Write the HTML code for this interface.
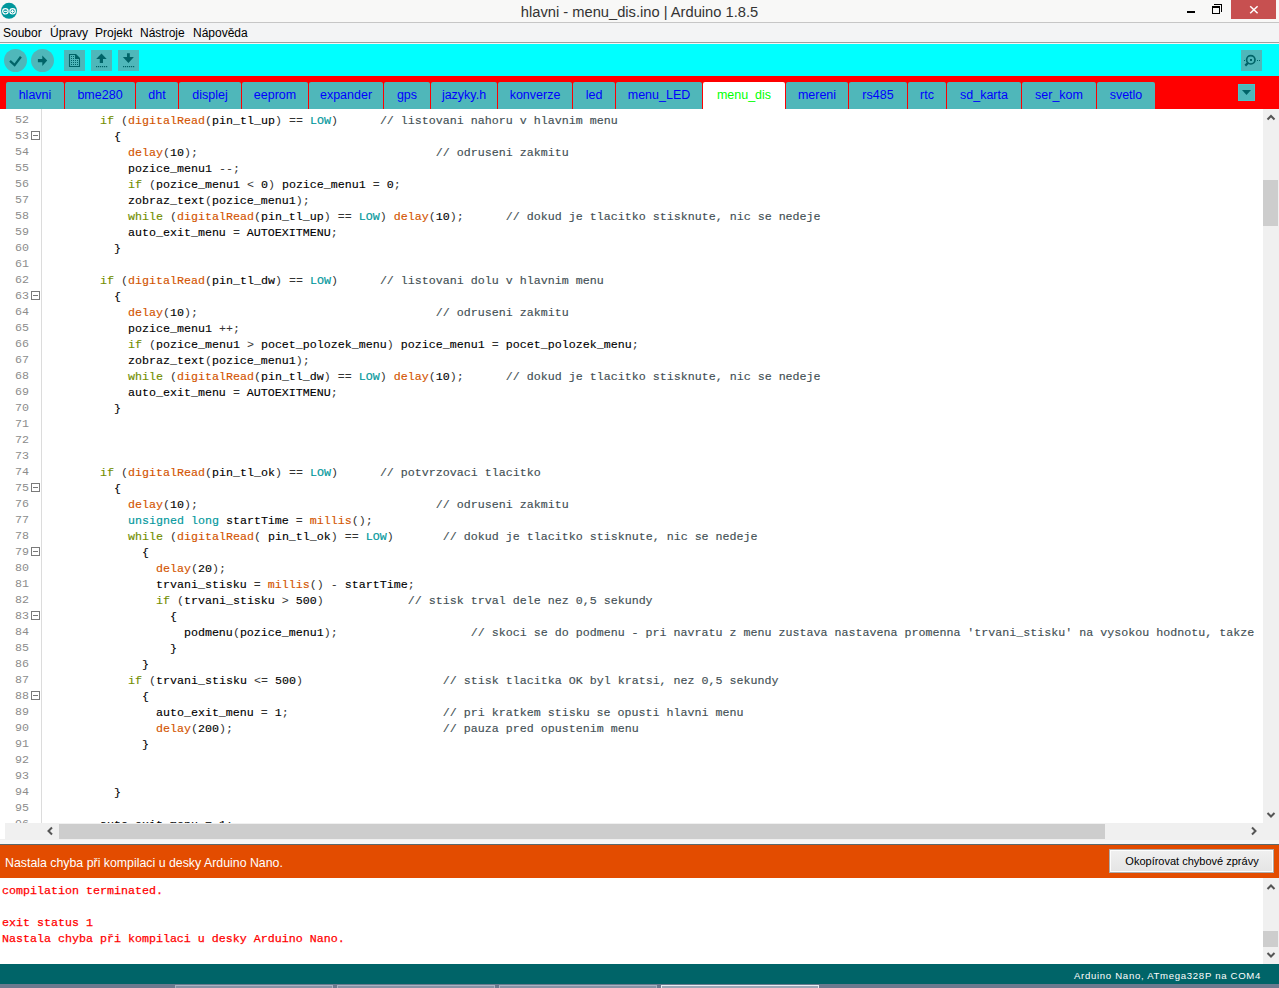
<!DOCTYPE html>
<html><head><meta charset="utf-8"><title>Arduino</title>
<style>
*{margin:0;padding:0;box-sizing:border-box}
html,body{width:1279px;height:988px;overflow:hidden;background:#fff;position:relative}
body{font-family:"Liberation Sans",sans-serif}
.a{position:absolute}
#title{left:0;top:0;width:1279px;height:22px;background:#f8f8f7}
#titletxt{left:0;top:3px;width:1279px;text-align:center;font-size:14.7px;color:#333;line-height:18px;white-space:nowrap}
#tline{left:0;top:22px;width:1279px;height:1px;background:#c6c6c6}
#menubar{left:0;top:23px;width:1279px;height:19px;background:#f3f4f5}
#mline{left:0;top:42px;width:1279px;height:1px;background:#a0a0a0}
#mline2{left:0;top:43px;width:1279px;height:1px;background:#f8f4f4}
.menu{top:26px;font-size:12px;color:#000;line-height:15px;white-space:nowrap}
#toolbar{left:0;top:44px;width:1279px;height:32px;background:#00ffff}
.tb{background:#4fb7ba}
.circ{border-radius:50%}
#tabs{left:0;top:76px;width:1279px;height:33px;background:#ff0000}
.tab{top:82px;height:27px;background:#4fb7ba;border-radius:2px 2px 0 0;color:#0000ff;font-size:12.5px;text-align:center;line-height:26px;white-space:nowrap}
.tab.sel{background:#fff;color:#00ff00}
#editor{left:0;top:109px;width:1263px;height:714px;background:#fff;overflow:hidden}
#gutline{left:41px;top:109px;width:1px;height:714px;background:#dcdcdc}
#nums{left:0;top:112px;width:29px;text-align:right;font-family:"Liberation Mono",monospace;font-size:11.67px;line-height:16px;color:#8c8c8c;white-space:pre}
#code{left:44px;top:113px;font-family:"Liberation Mono",monospace;font-size:11.67px;line-height:16px;color:#000;white-space:pre}
#code b{font-weight:normal}
#code{-webkit-text-stroke:0.12px currentColor}
#code b{-webkit-text-stroke:0.15px currentColor}
#code i{-webkit-text-stroke:0px currentColor}
#code i{font-style:normal;color:#333}
.k{color:#728e00}.f{color:#d35400}.c{color:#00979c}.m{color:#434f54}
.fold{left:31px;width:9px;height:9px;border:1px solid #7a7a7a;background:#fff}
.fold:after{content:"";position:absolute;left:1px;top:3px;width:5px;height:1px;background:#777}
.sbtrack{background:#f0f0f0}
.thumb{background:#cdcdcd}
#strip{left:0;top:839px;width:1279px;height:5px;background:#f0f0f0}
#sline{left:0;top:844px;width:1279px;height:1px;background:#596a6e}
#status{left:0;top:845px;width:1279px;height:33px;background:#e34c00}
#stattxt{left:5px;top:856px;font-size:12.35px;color:#fff;line-height:15px;white-space:nowrap}
#btn{left:1109px;top:849px;width:165px;height:24px;background:linear-gradient(#f0f0f0,#e5e5e5);border:1px solid #acacac;box-shadow:inset 0 0 0 1px #fcfcfc;font-size:11px;color:#000;text-align:center;line-height:22px;white-space:nowrap;padding-left:1px}
#console{left:0;top:878px;width:1263px;height:86px;background:#fff}
#ctext{-webkit-text-stroke:0.25px currentColor;left:2px;top:883px;font-family:"Liberation Mono",monospace;font-size:11.67px;line-height:16px;color:#ff0000;white-space:pre}
#bstatus{left:0;top:964px;width:1279px;height:20px;background:#006468}
#bstxt{left:1074px;top:970px;font-size:9.6px;color:#fff;line-height:12px;white-space:nowrap;letter-spacing:0.69px}
#taskbar{left:0;top:984px;width:1279px;height:4px;background:#6b7a8f}
.tk{top:985px;height:3px;border:1px solid #aab4c2;border-bottom:none;background:#8592a5}

</style></head><body>
<div class="a" id="title"></div>
<svg class="a" style="left:0;top:0" width="20" height="22" viewBox="0 0 20 22">
<circle cx="9" cy="10.8" r="8" fill="#00979c"/>
<circle cx="5.4" cy="11.3" r="2.7" fill="none" stroke="#fff" stroke-width="1.2"/>
<circle cx="12.6" cy="11.3" r="2.7" fill="none" stroke="#fff" stroke-width="1.2"/>
<rect x="4" y="10.8" width="3" height="1.1" fill="#fff"/>
<rect x="11" y="10.8" width="3" height="1.1" fill="#fff"/>
<rect x="11.95" y="9.8" width="1.1" height="3" fill="#fff"/>
</svg>
<div class="a" id="titletxt">hlavni - menu_dis.ino | Arduino 1.8.5</div>
<div class="a" style="left:1187px;top:11px;width:8px;height:2px;background:#000"></div>
<div class="a" style="left:1214px;top:4px;width:8px;height:8px;border:1px solid #000;border-left:none;border-bottom:none"></div>
<div class="a" style="left:1212px;top:6px;width:8px;height:8px;border:1px solid #000;border-top-width:2px;background:#f8f8f7"></div>
<div class="a" style="left:1231px;top:0;width:45px;height:19px;background:#c75050"></div>
<svg class="a" style="left:1249px;top:5px" width="10" height="10" viewBox="0 0 10 10"><path d="M1.2 1.2L8.6 8.2M8.6 1.2L1.2 8.2" stroke="#fff" stroke-width="1.5"/></svg>
<div class="a" id="tline"></div>
<div class="a" id="menubar"></div>
<div class="a" id="mline"></div>
<div class="a" id="mline2"></div>
<div class="a menu" style="left:3px">Soubor</div>
<div class="a menu" style="left:50px">Úpravy</div>
<div class="a menu" style="left:95px">Projekt</div>
<div class="a menu" style="left:140px">Nástroje</div>
<div class="a menu" style="left:193px">Nápověda</div>

<div class="a" id="toolbar"></div>
<div class="a tb circ" style="left:4px;top:49px;width:23px;height:23px"></div>
<div class="a tb circ" style="left:31px;top:49px;width:23px;height:23px"></div>
<div class="a tb" style="left:64px;top:50px;width:21px;height:21px"></div>
<div class="a tb" style="left:91px;top:50px;width:21px;height:21px"></div>
<div class="a tb" style="left:118px;top:50px;width:21px;height:21px"></div>
<div class="a tb" style="left:1241px;top:50px;width:21px;height:21px"></div>
<svg class="a" style="left:0;top:44px" width="160" height="32" viewBox="0 44 160 32">
<path d="M10 60.8l4.6 4.3 6.3-8.4" fill="none" stroke="#006468" stroke-width="2.3"/>
<path d="M37.9 59.1h4.4v-3.5l4.9 5-4.9 5.3v-3.7h-4.4z" fill="#006468"/>
<path d="M69.5 54.5h5.6l4.4 4.4v7.6h-10z" fill="none" stroke="#006468" stroke-width="1.1"/>
<path d="M75 54h1l4 4v1h-5z" fill="#006468"/>
<g fill="#006468"><rect x="71" y="56" width="1" height="1"/><rect x="73" y="56" width="1" height="1"/><rect x="71" y="58" width="1" height="1"/><rect x="73" y="58" width="1" height="1"/><rect x="71" y="60" width="1" height="1"/><rect x="73" y="60" width="1" height="1"/><rect x="75" y="60" width="1" height="1"/><rect x="77" y="60" width="1" height="1"/><rect x="71" y="62" width="1" height="1"/><rect x="73" y="62" width="1" height="1"/><rect x="75" y="62" width="1" height="1"/><rect x="77" y="62" width="1" height="1"/><rect x="71" y="64" width="1" height="1"/><rect x="73" y="64" width="1" height="1"/><rect x="75" y="64" width="1" height="1"/><rect x="77" y="64" width="1" height="1"/></g>
<path d="M101.5 53.5l5.2 5.4h-3.7v4h-3.2v-4h-3.6z" fill="#006468"/>
<g fill="#006468"><rect x="96" y="66" width="1.2" height="1.2"/><rect x="98" y="66" width="1.2" height="1.2"/><rect x="100" y="66" width="1.2" height="1.2"/><rect x="102" y="66" width="1.2" height="1.2"/><rect x="104" y="66" width="1.2" height="1.2"/><rect x="106" y="66" width="1.2" height="1.2"/></g>
<path d="M128.4 63l5.5-6h-4.1v-3.7h-2.8v3.7h-4.1z" fill="#006468"/>
<g fill="#006468"><rect x="123" y="66" width="1.2" height="1.2"/><rect x="125" y="66" width="1.2" height="1.2"/><rect x="127" y="66" width="1.2" height="1.2"/><rect x="129" y="66" width="1.2" height="1.2"/><rect x="131" y="66" width="1.2" height="1.2"/><rect x="133" y="66" width="1.2" height="1.2"/></g>
</svg>
<svg class="a" style="left:1241px;top:50px" width="21" height="21" viewBox="1241 50 21 21">
<circle cx="1250.8" cy="59.8" r="4.2" fill="none" stroke="#006468" stroke-width="1.7"/>
<rect x="1250" y="59" width="2" height="2" fill="#006468"/>
<path d="M1248.3 62.6l-3 3" stroke="#006468" stroke-width="2.2"/>
<rect x="1244" y="60" width="1" height="1" fill="#006468"/>
<rect x="1257" y="60" width="1" height="1" fill="#006468"/>
<rect x="1259" y="60" width="1" height="1" fill="#006468"/>
</svg>

<div class="a" id="tabs"></div>
<div class="a tab" style="left:6px;width:58px">hlavni</div><div class="a tab" style="left:65px;width:70px">bme280</div><div class="a tab" style="left:136px;width:42px">dht</div><div class="a tab" style="left:179px;width:62px">displej</div><div class="a tab" style="left:242px;width:66px">eeprom</div><div class="a tab" style="left:309px;width:74px">expander</div><div class="a tab" style="left:384px;width:46px">gps</div><div class="a tab" style="left:431px;width:66px">jazyky.h</div><div class="a tab" style="left:498px;width:74px">konverze</div><div class="a tab" style="left:573px;width:42px">led</div><div class="a tab" style="left:616px;width:86px">menu_LED</div><div class="a tab sel" style="left:703px;width:82px">menu_dis</div><div class="a tab" style="left:786px;width:62px">mereni</div><div class="a tab" style="left:849px;width:58px">rs485</div><div class="a tab" style="left:908px;width:38px">rtc</div><div class="a tab" style="left:947px;width:74px">sd_karta</div><div class="a tab" style="left:1022px;width:74px">ser_kom</div><div class="a tab" style="left:1097px;width:58px">svetlo</div>
<div class="a tb" style="left:1238px;top:84px;width:17px;height:17px;box-shadow:inset 0 0 0 1px #48c4c8"></div>
<svg class="a" style="left:1238px;top:84px" width="17" height="17"><path d="M4 6h9l-4.5 5z" fill="#006468"/></svg>

<div class="a" id="editor"></div>
<div class="a" id="gutline"></div>
<div class="a" id="nums">52
53
54
55
56
57
58
59
60
61
62
63
64
65
66
67
68
69
70
71
72
73
74
75
76
77
78
79
80
81
82
83
84
85
86
87
88
89
90
91
92
93
94
95
96</div>
<div class="a fold" style="top:131px"></div><div class="a fold" style="top:291px"></div><div class="a fold" style="top:483px"></div><div class="a fold" style="top:547px"></div><div class="a fold" style="top:611px"></div><div class="a fold" style="top:691px"></div>
<div class="a" id="code">        <b class="k">if</b> <i>(</i><b class="f">digitalRead</b><i>(</i>pin_tl_up<i>)</i> <i>=</i><i>=</i> <b class="c">LOW</b><i>)</i>      <b class="m">// listovani nahoru v hlavnim menu</b>
          {
            <b class="f">delay</b><i>(</i>10<i>)</i><i>;</i>                                  <b class="m">// odruseni zakmitu</b>
            pozice_menu1 <i>-</i><i>-</i><i>;</i>
            <b class="k">if</b> <i>(</i>pozice_menu1 <i>&lt;</i> 0<i>)</i> pozice_menu1 <i>=</i> 0<i>;</i>
            zobraz_text<i>(</i>pozice_menu1<i>)</i><i>;</i>
            <b class="k">while</b> <i>(</i><b class="f">digitalRead</b><i>(</i>pin_tl_up<i>)</i> <i>=</i><i>=</i> <b class="c">LOW</b><i>)</i> <b class="f">delay</b><i>(</i>10<i>)</i><i>;</i>      <b class="m">// dokud je tlacitko stisknute, nic se nedeje</b>
            auto_exit_menu <i>=</i> AUTOEXITMENU<i>;</i>
          }

        <b class="k">if</b> <i>(</i><b class="f">digitalRead</b><i>(</i>pin_tl_dw<i>)</i> <i>=</i><i>=</i> <b class="c">LOW</b><i>)</i>      <b class="m">// listovani dolu v hlavnim menu</b>
          {
            <b class="f">delay</b><i>(</i>10<i>)</i><i>;</i>                                  <b class="m">// odruseni zakmitu</b>
            pozice_menu1 <i>+</i><i>+</i><i>;</i>
            <b class="k">if</b> <i>(</i>pozice_menu1 <i>&gt;</i> pocet_polozek_menu<i>)</i> pozice_menu1 <i>=</i> pocet_polozek_menu<i>;</i>
            zobraz_text<i>(</i>pozice_menu1<i>)</i><i>;</i>
            <b class="k">while</b> <i>(</i><b class="f">digitalRead</b><i>(</i>pin_tl_dw<i>)</i> <i>=</i><i>=</i> <b class="c">LOW</b><i>)</i> <b class="f">delay</b><i>(</i>10<i>)</i><i>;</i>      <b class="m">// dokud je tlacitko stisknute, nic se nedeje</b>
            auto_exit_menu <i>=</i> AUTOEXITMENU<i>;</i>
          }



        <b class="k">if</b> <i>(</i><b class="f">digitalRead</b><i>(</i>pin_tl_ok<i>)</i> <i>=</i><i>=</i> <b class="c">LOW</b><i>)</i>      <b class="m">// potvrzovaci tlacitko</b>
          {
            <b class="f">delay</b><i>(</i>10<i>)</i><i>;</i>                                  <b class="m">// odruseni zakmitu</b>
            <b class="c">unsigned</b> <b class="c">long</b> startTime <i>=</i> <b class="f">millis</b><i>(</i><i>)</i><i>;</i>
            <b class="k">while</b> <i>(</i><b class="f">digitalRead</b><i>(</i> pin_tl_ok<i>)</i> <i>=</i><i>=</i> <b class="c">LOW</b><i>)</i>       <b class="m">// dokud je tlacitko stisknute, nic se nedeje</b>
              {
                <b class="f">delay</b><i>(</i>20<i>)</i><i>;</i>
                trvani_stisku <i>=</i> <b class="f">millis</b><i>(</i><i>)</i> <i>-</i> startTime<i>;</i>
                <b class="k">if</b> <i>(</i>trvani_stisku <i>&gt;</i> 500<i>)</i>            <b class="m">// stisk trval dele nez 0,5 sekundy</b>
                  {
                    podmenu<i>(</i>pozice_menu1<i>)</i><i>;</i>                   <b class="m">// skoci se do podmenu - pri navratu z menu zustava nastavena promenna &#x27;trvani_stisku&#x27; na vysokou hodnotu, takze</b>
                  }
              }
            <b class="k">if</b> <i>(</i>trvani_stisku <i>&lt;</i><i>=</i> 500<i>)</i>                    <b class="m">// stisk tlacitka OK byl kratsi, nez 0,5 sekundy</b>
              {
                auto_exit_menu <i>=</i> 1<i>;</i>                      <b class="m">// pri kratkem stisku se opusti hlavni menu</b>
                <b class="f">delay</b><i>(</i>200<i>)</i><i>;</i>                              <b class="m">// pauza pred opustenim menu</b>
              }


          }

        auto_exit_menu <i>=</i> 1<i>;</i></div>
<div class="a sbtrack" style="left:1263px;top:109px;width:16px;height:714px"></div>
<div class="a thumb" style="left:1263px;top:180px;width:15px;height:46px"></div>
<svg class="a" style="left:1263px;top:109px" width="16" height="16"><path d="M4.5 10.5l3.5-3.5 3.5 3.5" fill="none" stroke="#555" stroke-width="2"/></svg>
<svg class="a" style="left:1263px;top:807px" width="16" height="16"><path d="M4.5 6l3.5 3.5 3.5-3.5" fill="none" stroke="#555" stroke-width="2"/></svg>
<div class="a" style="left:0;top:823px;width:1279px;height:16px;background:#fff"></div>
<div class="a sbtrack" style="left:5px;top:823px;width:1258px;height:16px"></div>
<div class="a sbtrack" style="left:1263px;top:823px;width:16px;height:16px"></div>
<div class="a thumb" style="left:59px;top:824px;width:1046px;height:15px"></div>
<svg class="a" style="left:42px;top:823px" width="16" height="16"><path d="M10 4.5l-3.5 3.5 3.5 3.5" fill="none" stroke="#555" stroke-width="2"/></svg>
<svg class="a" style="left:1246px;top:823px" width="16" height="16"><path d="M6 4.5l3.5 3.5-3.5 3.5" fill="none" stroke="#555" stroke-width="2"/></svg>
<div class="a" id="strip"></div><div class="a" style="left:0;top:840px;width:1279px;height:4px;background:#f6f6f6"></div>
<div class="a" id="sline"></div>
<div class="a" id="status"></div>
<div class="a" id="stattxt">Nastala chyba při kompilaci u desky Arduino Nano.</div>
<div class="a" id="btn">Okopírovat chybové zprávy</div>
<div class="a" id="console"></div>
<div class="a" id="ctext">compilation terminated.

exit status 1
Nastala chyba při kompilaci u desky Arduino Nano.</div>
<div class="a sbtrack" style="left:1263px;top:878px;width:16px;height:86px"></div>
<div class="a thumb" style="left:1263px;top:931px;width:15px;height:16px"></div>
<svg class="a" style="left:1263px;top:878px" width="16" height="16"><path d="M4.5 11l3.5-3.5 3.5 3.5" fill="none" stroke="#555" stroke-width="2"/></svg>
<svg class="a" style="left:1263px;top:947px" width="16" height="16"><path d="M4.5 6l3.5 3.5 3.5-3.5" fill="none" stroke="#555" stroke-width="2"/></svg>
<div class="a" id="bstatus"></div>
<div class="a" id="bstxt">Arduino Nano, ATmega328P na COM4</div>
<div class="a" id="taskbar"></div>
<div class="a tk" style="left:175px;width:158px"></div>
<div class="a tk" style="left:337px;width:158px"></div>
<div class="a tk" style="left:499px;width:158px"></div>
<div class="a tk" style="left:661px;width:158px;border-color:#e8ecf0;background:#9aa6b6"></div>

</body></html>
